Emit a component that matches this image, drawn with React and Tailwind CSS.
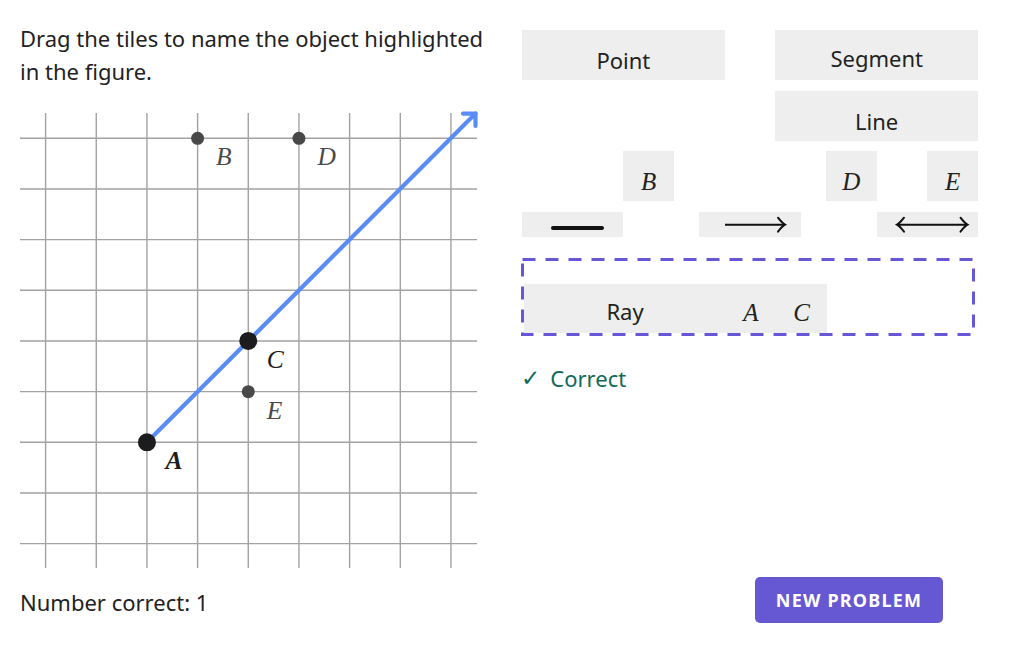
import React from "react";

const U = 50.67;
const gx = (i) => 25.6 + i * U;
const gy = (j) => 25.3 + j * U;

const points = [
  { id: "B", x: 3, y: 0, big: false },
  { id: "D", x: 5, y: 0, big: false },
  { id: "C", x: 4, y: 4, big: true },
  { id: "E", x: 4, y: 5, big: false },
  { id: "A", x: 2, y: 6, big: true, bold: true },
];

function Figure() {
  const ax = gx(2);
  const ay = gy(6);
  return (
    <svg width="457" height="455" viewBox="0 0 457 455" className="block overflow-visible mt-[25px]">
      {Array.from({ length: 9 }).map((_, i) => (
        <line key={"v" + i} x1={gx(i)} y1="0" x2={gx(i)} y2="455" stroke="#a2a2a2" strokeWidth="1.4" />
      ))}
      {Array.from({ length: 9 }).map((_, j) => (
        <line key={"h" + j} x1="0" y1={gy(j)} x2="457" y2={gy(j)} stroke="#a2a2a2" strokeWidth="1.4" />
      ))}
      <line x1={ax} y1={ay} x2="455.5" y2="0.6" stroke="#5a8cf8" strokeWidth="4.2" strokeLinecap="round" />
      <polyline points="443,0.6 455.5,0.6 455.5,13" fill="none" stroke="#5a8cf8" strokeWidth="4.2" strokeLinecap="round" strokeLinejoin="round" />
      {points.map((p) => (
        <circle key={p.id} cx={gx(p.x)} cy={gy(p.y)} r={p.big ? 9 : 6.5} fill={p.big ? "#1c1c1e" : "#484848"} />
      ))}
      {points.map((p) => (
        <text
          key={"t" + p.id}
          x={gx(p.x) + 18.5}
          y={gy(p.y) + 27}
          fontFamily="'Liberation Serif', serif"
          fontStyle="italic"
          fontWeight={p.bold ? 700 : 400}
          fontSize="25.5"
          fill={p.big ? "#1c1c1e" : "#4a4a4a"}
        >
          {p.id}
        </text>
      ))}
    </svg>
  );
}

function Tile({ className, children }) {
  return (
    <div className={"bg-[#eeeeee] flex justify-center items-center " + className}>{children}</div>
  );
}

function Letter({ children }) {
  return <span className="font-['Liberation_Serif'] italic text-[25px] leading-none">{children}</span>;
}

function Head({ x, y, dir }) {
  const d = dir * 7;
  return (
    <path
      d={`M ${x - d} ${y - 7} Q ${x - d * 0.4} ${y - 1.5} ${x} ${y} Q ${x - d * 0.4} ${y + 1.5} ${x - d} ${y + 7}`}
      fill="none"
      stroke="#111"
      strokeWidth="2"
      strokeLinecap="round"
    />
  );
}

function TileBoard() {
  return (
    <div className="grid grid-cols-18 grid-rows-[50px_50px_50px_25px] gap-y-[10.7px] w-[456px] ml-[1px] mt-[8px]">
      <Tile className="col-start-1 col-span-8 row-start-1 pt-[11px]">Point</Tile>
      <Tile className="col-start-11 col-span-8 row-start-1 pt-[7px]">Segment</Tile>
      <Tile className="col-start-11 col-span-8 row-start-2 pt-[11px]">Line</Tile>
      <Tile className="col-start-5 col-span-2 row-start-3 pt-[10px]">
        <Letter>B</Letter>
      </Tile>
      <Tile className="col-start-13 col-span-2 row-start-3 pt-[10px]">
        <Letter>D</Letter>
      </Tile>
      <Tile className="col-start-17 col-span-2 row-start-3 pt-[10px]">
        <Letter>E</Letter>
      </Tile>
      <div className="col-start-1 col-span-4 row-start-4 bg-[#eeeeee]">
        <svg width="101" height="25" className="block">
          <line x1="31" y1="16" x2="80" y2="16" stroke="#111" strokeWidth="4" strokeLinecap="round" />
        </svg>
      </div>
      <div className="col-start-8 col-span-4 row-start-4 bg-[#eeeeee]">
        <svg width="101" height="25" className="block">
          <line x1="26" y1="12.7" x2="85.5" y2="12.7" stroke="#111" strokeWidth="2" />
          <Head x={86} y={12.7} dir={1} />
        </svg>
      </div>
      <div className="col-start-15 col-span-4 row-start-4 bg-[#eeeeee]">
        <svg width="101" height="25" className="block">
          <line x1="20.5" y1="12.7" x2="90" y2="12.7" stroke="#111" strokeWidth="2" />
          <Head x={20} y={12.7} dir={-1} />
          <Head x={90.5} y={12.7} dir={1} />
        </svg>
      </div>
    </div>
  );
}

function DropZone() {
  return (
    <div className="relative w-[454px] h-[78px] mt-[21px] pl-[3px] pt-[26px] flex items-start">
      <Tile className="w-[202px] h-[49px] pt-[6px]">Ray</Tile>
      <Tile className="w-[50px] h-[49px] pt-[8px]">
        <Letter>A</Letter>
      </Tile>
      <Tile className="w-[51px] h-[49px] pt-[8px]">
        <Letter>C</Letter>
      </Tile>
      <svg className="absolute inset-0 pointer-events-none" width="454" height="78">
        <rect x="1.5" y="1.5" width="451" height="75" fill="none" stroke="#6657d6" strokeWidth="3" strokeDasharray="13 10" />
      </svg>
    </div>
  );
}

export default function App() {
  return (
    <div className="w-[1032px] h-[645px] bg-white text-[#222] font-['Noto_Sans',sans-serif] text-[22px]">
      <div className="flex pl-5 pt-[22px]">
        <div className="w-[477px]">
          <p className="leading-[33px] w-[476px]">Drag the tiles to name the object highlighted in the figure.</p>
          <Figure />
        </div>
        <div className="ml-[24px] w-[457px]">
          <TileBoard />
          <DropZone />
          <div className="mt-[26px] leading-[33px] text-[#0f6b59] flex items-center">
            <span className="font-['DejaVu_Sans'] text-[23px] mr-[10px]">✓</span>
            <span>Correct</span>
          </div>
        </div>
      </div>
      <div className="flex items-center justify-between pl-5 w-[943px] mt-[9px]">
        <span className="pt-[4px]">Number correct: 1</span>
        <button className="w-[188px] h-[46px] rounded-[5px] bg-[#6657d3] text-white font-bold text-[18px] tracking-[1.2px]">
          NEW PROBLEM
        </button>
      </div>
    </div>
  );
}
